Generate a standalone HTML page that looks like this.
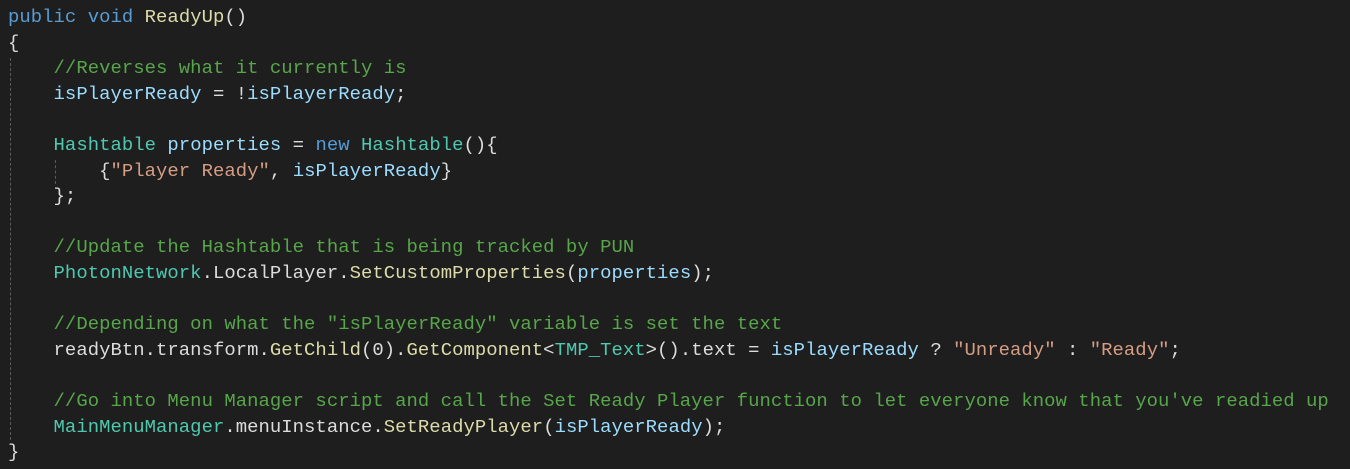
<!DOCTYPE html>
<html><head><style>
html,body{margin:0;padding:0;background:#1e1e1e;width:1350px;height:469px;overflow:hidden}
.l{position:absolute;left:8px;height:25.6px;line-height:25.6px;font-family:"Liberation Mono",monospace;font-size:18.9px;color:#dcdcdc;white-space:pre;letter-spacing:0.05px}
.k{color:#569cd6}.m{color:#dcdcaa}.c{color:#57a64a}.t{color:#4ec9b0}.v{color:#9cdcfe}.s{color:#d69d85}
.g{position:absolute;width:0;border-left:1px dashed #5a5a5a}
</style></head><body>
<div class="l" style="top:-18px;color:#888;font-size:13px;font-family:'Liberation Sans',sans-serif;left:8px">1 reference</div>
<div class="g" style="left:10px;top:58px;height:382px"></div>
<div class="g" style="left:55px;top:160px;height:24px"></div>
<div class="l" style="top:5px"><span class="k">public</span> <span class="k">void</span> <span class="m">ReadyUp</span>()</div>
<div class="l" style="top:30.6px">{</div>
<div class="l" style="top:56.2px">    <span class="c">//Reverses what it currently is</span></div>
<div class="l" style="top:81.8px">    <span class="v">isPlayerReady</span> = !<span class="v">isPlayerReady</span>;</div>
<div class="l" style="top:133px">    <span class="t">Hashtable</span> <span class="v">properties</span> = <span class="k">new</span> <span class="t">Hashtable</span>(){</div>
<div class="l" style="top:158.6px">        {<span class="s">"Player Ready"</span>, <span class="v">isPlayerReady</span>}</div>
<div class="l" style="top:184.2px">    };</div>
<div class="l" style="top:235.4px">    <span class="c">//Update the Hashtable that is being tracked by PUN</span></div>
<div class="l" style="top:261px">    <span class="t">PhotonNetwork</span>.LocalPlayer.<span class="m">SetCustomProperties</span>(<span class="v">properties</span>);</div>
<div class="l" style="top:312.2px">    <span class="c">//Depending on what the "isPlayerReady" variable is set the text</span></div>
<div class="l" style="top:337.8px">    readyBtn.transform.<span class="m">GetChild</span>(0).<span class="m">GetComponent</span>&lt;<span class="t">TMP_Text</span>&gt;().text = <span class="v">isPlayerReady</span> ? <span class="s">"Unready"</span> : <span class="s">"Ready"</span>;</div>
<div class="l" style="top:389px">    <span class="c">//Go into Menu Manager script and call the Set Ready Player function to let everyone know that you've readied up</span></div>
<div class="l" style="top:414.6px">    <span class="t">MainMenuManager</span>.menuInstance.<span class="m">SetReadyPlayer</span>(<span class="v">isPlayerReady</span>);</div>
<div class="l" style="top:440.2px">}</div>
</body></html>
